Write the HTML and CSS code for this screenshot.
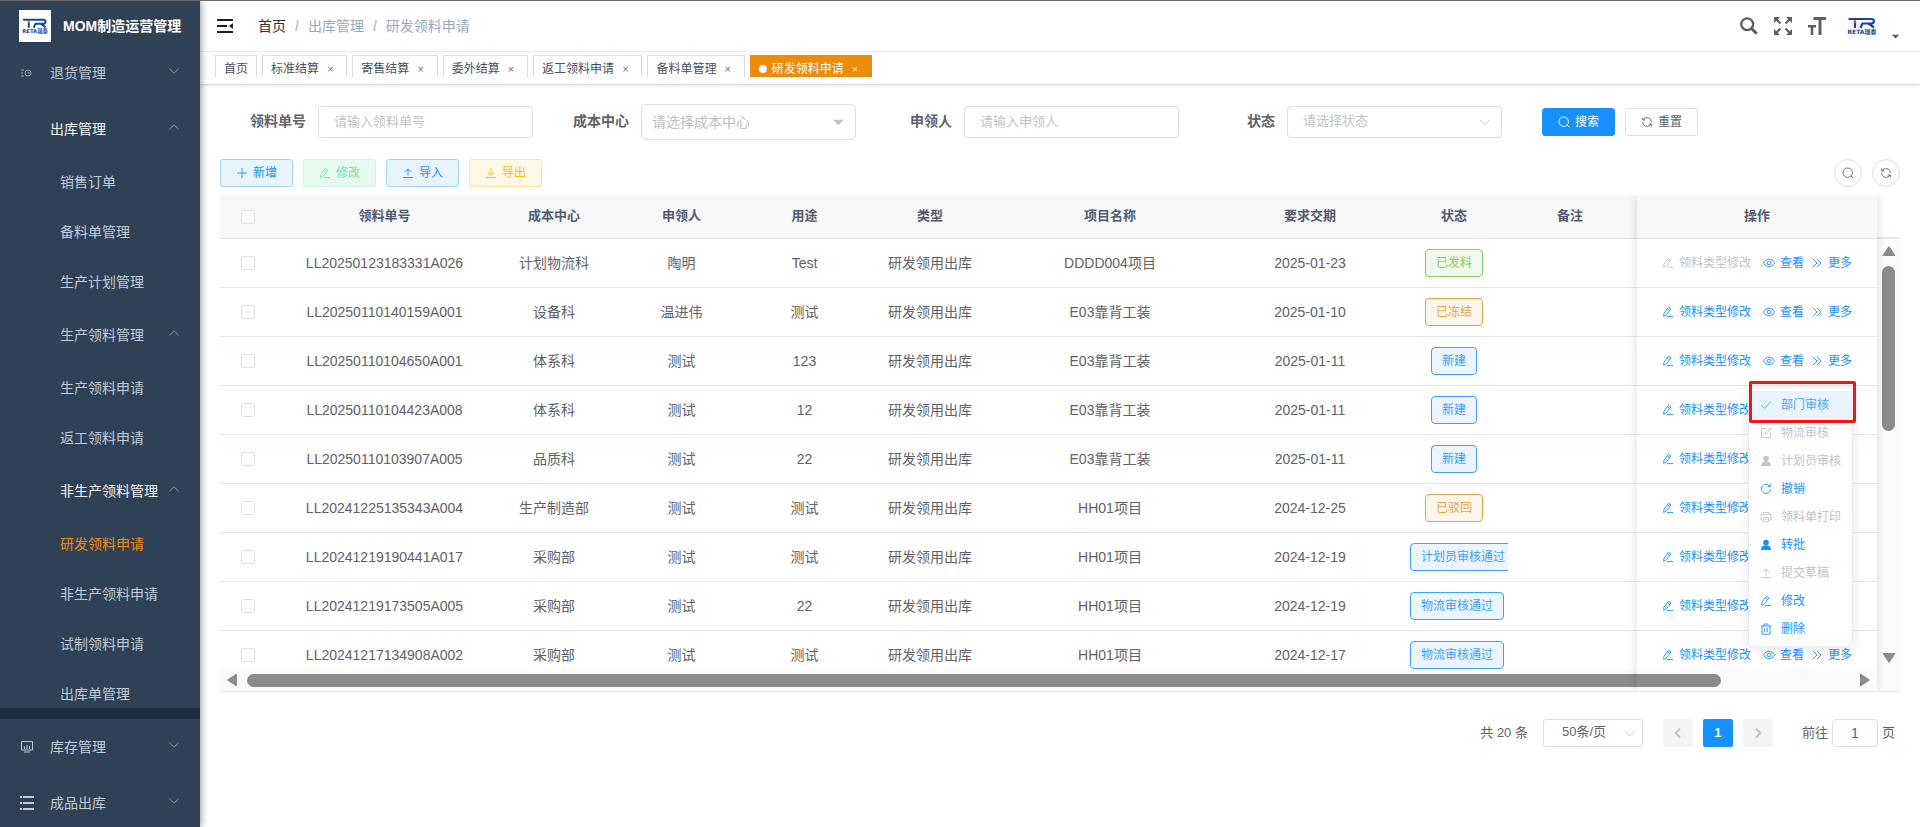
FILE: index.html
```html
<!DOCTYPE html>
<html lang="zh-CN">
<head>
<meta charset="utf-8">
<title>研发领料申请 - MOM制造运营管理</title>
<link rel="stylesheet" href="styles.css">
</head>
<body>
<svg class="sprite" aria-hidden="true">
  <symbol id="i-down" viewBox="0 0 12 12"><path d="M1.5 3.8 6 8.2l4.500-4.400"/></symbol>
  <symbol id="i-up" viewBox="0 0 12 12"><path d="M1.500 8.200 6 3.800l4.500 4.400"/></symbol>
  <symbol id="i-left" viewBox="0 0 12 12"><path d="M8 1.500 3.800 6 8 10.500"/></symbol>
  <symbol id="i-right" viewBox="0 0 12 12"><path d="M4 1.500 8.200 6 4 10.500"/></symbol>
  <symbol id="i-plus" viewBox="0 0 12 12"><path d="M6 1v10M1 6h10"/></symbol>
  <symbol id="i-edit" viewBox="0 0 12 12"><path d="M2 7.200 6.600 1.200l2.300 1.700L4.300 9 1.600 10.400zM5.500 2.800l2.200 1.700M5 10.600h6"/></symbol>
  <symbol id="i-upload" viewBox="0 0 12 12"><path d="M6 8.500V2M2.800 5 6 1.800 9.200 5M1 10.500h10"/></symbol>
  <symbol id="i-download" viewBox="0 0 12 12"><path d="M6 1v7M2.800 5 6 8.200 9.200 5M1 10.500h10"/></symbol>
  <symbol id="i-search" viewBox="0 0 12 12"><circle cx="5.700" cy="5.700" r="4.700"/><path d="m9 9 2.300 2.300"/></symbol>
  <symbol id="i-refresh" viewBox="0 0 12 12"><path d="M10.400 6A4.400 4.400 0 0 0 3 2.800L2 4M1.700 1.500V4h2.600M1.600 6A4.400 4.400 0 0 0 9 9.200L10 8M10.300 10.500V8H7.700"/></symbol>
  <symbol id="i-redo" viewBox="0 0 12 12"><path d="M10.500 6.300A4.600 4.600 0 1 1 8.600 2.200L10 3.300M10.300.8v2.700H7.600"/></symbol>
  <symbol id="i-eye" viewBox="0 0 12 12"><path d="M.5 6C2 3.300 4 2.200 6 2.200S10 3.300 11.500 6C10 8.700 8 9.800 6 9.800S2 8.700.5 6z"/><circle cx="6" cy="6" r="1.900"/></symbol>
  <symbol id="i-more" viewBox="0 0 12 12"><path d="M2 1.800 6 6l-4 4.200M6 1.800 10 6l-4 4.200"/></symbol>
  <symbol id="i-check" viewBox="0 0 12 12"><path d="m1.200 6.200 3.300 3.200L11 2.600"/></symbol>
  <symbol id="i-editbox" viewBox="0 0 12 12"><path d="M6.500 1.500h-5v9h9v-5M5 7l.3-1.600L10 .9l1 1L6.500 6.700z"/></symbol>
  <symbol id="i-user" viewBox="0 0 12 12"><g fill="currentColor" stroke="none"><circle cx="6" cy="3.600" r="2.900"/><path d="M4.800 6.500h2.400c2.500.3 3.800 1.800 3.800 4.500H1c0-2.700 1.300-4.200 3.800-4.500z"/></g></symbol>
  <symbol id="i-print" viewBox="0 0 12 12"><path d="M3 3.500v-2h6v2M3 9H1V3.500h10V9H9M3.500 6.500h5v4.300h-5zM5 8.500h2"/></symbol>
  <symbol id="i-trash" viewBox="0 0 12 12"><path d="M.8 3h10.400M2 3v8.200h8V3M4 2.800V1h4v1.800M4.700 5v4M7.300 5v4"/></symbol>
  <symbol id="i-dropdown" viewBox="0 0 12 12"><path d="M1 3.500h10L6 8.500z" fill="currentColor" stroke="none"/></symbol>
  <symbol id="i-arrow" viewBox="0 0 16 12"><path d="M8 1.500 14 10.500H2z" fill="currentColor" stroke="currentColor" stroke-linejoin="round"/></symbol>
  <symbol id="logo" viewBox="0 0 34 18">
    <g fill="none" stroke="#12479c" stroke-width="2.200"><path d="M3.500 2H17M10 5v6"/><path d="M17 2h9c4 0 4 4.500 0 4.500h-8.500L15.500 11M23.500 6.500 29 10.500" stroke-linejoin="round"/></g>
    <path d="M8.900 3.200h2.200v3H8.900z" fill="#e8413c"/>
    <text x="17" y="17" text-anchor="middle" class="logo-name">RETA瑞泰</text>
  </symbol>
</svg>

<div class="app">
  <aside class="sidebar">
    <div class="brand"><span class="brand-logo"><svg><use href="#logo"/></svg></span><h1>MOM制造运营管理</h1></div>
    <nav class="menu">
      <a href="#" class="group"><svg class="menu-icon faint" viewBox="0 0 14 14"><path d="M1 4h3M1 7h2M1 10h3"/><circle cx="8" cy="7" r="3"/><path d="M8 5.500V7h1.500"/></svg><span>退货管理</span><svg class="icon chevron"><use href="#i-down"/></svg></a>
      <a href="#" class="group open"><i class="menu-icon"></i><span>出库管理</span><svg class="icon chevron"><use href="#i-up"/></svg></a>
      <a href="#" class="leaf">销售订单</a>
      <a href="#" class="leaf">备料单管理</a>
      <a href="#" class="leaf">生产计划管理</a>
      <a href="#" class="group sub"><span>生产领料管理</span><svg class="icon chevron"><use href="#i-up"/></svg></a>
      <a href="#" class="leaf">生产领料申请</a>
      <a href="#" class="leaf">返工领料申请</a>
      <a href="#" class="group sub open"><span>非生产领料管理</span><svg class="icon chevron"><use href="#i-up"/></svg></a>
      <a href="#" class="leaf current">研发领料申请</a>
      <a href="#" class="leaf">非生产领料申请</a>
      <a href="#" class="leaf">试制领料申请</a>
      <a href="#" class="leaf last">出库单管理</a>
      <a href="#" class="group"><svg class="menu-icon" viewBox="0 0 14 14"><path d="M1.500 1.500h11v8.500h-11zM4 12h6M4.500 6.500v2.500M7 5v4M9.500 6v3"/></svg><span>库存管理</span><svg class="icon chevron"><use href="#i-down"/></svg></a>
      <a href="#" class="group"><svg class="menu-icon bold" viewBox="0 0 14 14"><path d="M0 1h2M3 1h11M0 7h2M3 7h11M0 13h2M3 13h11"/></svg><span>成品出库</span><svg class="icon chevron"><use href="#i-down"/></svg></a>
    </nav>
  </aside>

  <main class="main">
    <header class="navbar">
      <button class="fold" aria-label="折叠菜单"><svg viewBox="0 0 16 14"><path d="M0 1h16M0 7h10M0 13h16" stroke="currentColor" stroke-width="2"/><path d="M16 4v6l-4-3z" fill="currentColor"/></svg></button>
      <nav class="crumbs"><a href="#">首页</a><b>/</b><span>出库管理</span><b>/</b><span>研发领料申请</span></nav>
      <div class="tools">
        <button aria-label="搜索"><svg viewBox="0 0 18 18" fill="none" stroke="currentColor"><circle cx="7.200" cy="7.200" r="5.900" stroke-width="2.300"/><path d="m11.500 11.500 5.300 5.300" stroke-width="3"/></svg></button>
        <button aria-label="全屏"><svg viewBox="0 0 18 18" fill="currentColor" stroke="currentColor"><path d="M0 0h6L0 6zM18 0v6l-6-6zM0 18v-6l6 6zM18 18h-6l6-6z" stroke="none"/><path d="m2 2 4.500 4.500M16 2l-4.500 4.500M2 16l4.500-4.500M16 16l-4.500-4.500" stroke-width="2.200"/></svg></button>
        <button aria-label="字号"><svg viewBox="0 0 18 18" fill="currentColor"><path d="M5.500 0H18v3h-4.500v15h-3V3h-5zM0 8h8v2.500H5.300V18H2.700v-7.500H0z"/></svg></button>
        <button class="account" aria-label="账户"><svg class="account-logo"><use href="#logo"/></svg><svg class="icon caret"><use href="#i-dropdown"/></svg></button>
      </div>
    </header>

    <nav class="tabs">
      <div class="tabs-row">
        <a href="#" class="tab">首页</a>
        <a href="#" class="tab">标准结算 <i>×</i></a>
        <a href="#" class="tab">寄售结算 <i>×</i></a>
        <a href="#" class="tab">委外结算 <i>×</i></a>
        <a href="#" class="tab">返工领料申请 <i>×</i></a>
        <a href="#" class="tab">备料单管理 <i>×</i></a>
        <a href="#" class="tab active">研发领料申请 <i>×</i></a>
      </div>
    </nav>

    <div class="content">
      <form class="filters">
        <div class="field"><label for="f-no">领料单号</label><input id="f-no" type="text" placeholder="请输入领料单号"></div>
        <div class="field"><label for="f-center">成本中心</label><div class="select tall"><select id="f-center"><option>请选择成本中心</option></select><svg class="icon"><use href="#i-dropdown"/></svg></div></div>
        <div class="field"><label for="f-user">申领人</label><input id="f-user" type="text" placeholder="请输入申领人"></div>
        <div class="field"><label for="f-state">状态</label><div class="select"><select id="f-state"><option>请选择状态</option></select><svg class="icon"><use href="#i-down"/></svg></div></div>
        <div class="filter-actions">
          <button type="button" class="btn primary"><svg class="icon"><use href="#i-search"/></svg>搜索</button>
          <button type="button" class="btn"><svg class="icon"><use href="#i-refresh"/></svg>重置</button>
        </div>
      </form>

      <div class="toolbar">
        <button class="btn blue"><svg class="icon"><use href="#i-plus"/></svg>新增</button>
        <button class="btn green" disabled><svg class="icon"><use href="#i-edit"/></svg>修改</button>
        <button class="btn blue"><svg class="icon"><use href="#i-upload"/></svg>导入</button>
        <button class="btn yellow"><svg class="icon"><use href="#i-download"/></svg>导出</button>
        <div class="round-group">
          <button class="round" aria-label="显示搜索"><svg class="icon"><use href="#i-search"/></svg></button>
          <button class="round" aria-label="刷新"><svg class="icon"><use href="#i-refresh"/></svg></button>
        </div>
      </div>

      <section class="grid">
        <div class="grid-view">
          <table>
            <colgroup><col class="c-check"><col class="c-no"><col class="c-center"><col class="c-user"><col class="c-use"><col class="c-type"><col class="c-project"><col class="c-date"><col class="c-state"><col><col class="c-ops"></colgroup>
            <thead><tr><th><input type="checkbox" aria-label="全选"></th><th>领料单号</th><th>成本中心</th><th>申领人</th><th>用途</th><th>类型</th><th>项目名称</th><th>要求交期</th><th>状态</th><th class="note">备注</th><th>操作</th></tr></thead>
            <tbody id="rows"></tbody>
          </table>
        </div>
        <div class="vscroll"><svg class="arrow"><use href="#i-arrow"/></svg><div class="vtrack"><div class="vthumb"></div></div><svg class="arrow down"><use href="#i-arrow"/></svg></div>
        <div class="hscroll"><svg class="arrow left"><use href="#i-arrow"/></svg><div class="htrack"><div class="hthumb"></div></div><svg class="arrow right"><use href="#i-arrow"/></svg></div>
        <div class="fixed-shadow"></div>

        <div class="popup">
          <button class="hover"><svg class="icon"><use href="#i-check"/></svg>部门审核</button>
          <button disabled><svg class="icon"><use href="#i-editbox"/></svg>物流审核</button>
          <button disabled><svg class="icon"><use href="#i-user"/></svg>计划员审核</button>
          <button><svg class="icon"><use href="#i-redo"/></svg>撤销</button>
          <button disabled><svg class="icon"><use href="#i-print"/></svg>领料单打印</button>
          <button><svg class="icon"><use href="#i-user"/></svg>转批</button>
          <button disabled><svg class="icon"><use href="#i-upload"/></svg>提交草稿</button>
          <button><svg class="icon"><use href="#i-edit"/></svg>修改</button>
          <button><svg class="icon"><use href="#i-trash"/></svg>删除</button>
          <span class="marker"></span>
        </div>
      </section>

      <footer class="pager">
        <span class="total">共 20 条</span>
        <div class="select size"><select aria-label="每页条数"><option>50条/页</option></select><svg class="icon"><use href="#i-down"/></svg></div>
        <button class="page" disabled aria-label="上一页"><svg class="icon"><use href="#i-left"/></svg></button>
        <button class="page on">1</button>
        <button class="page" disabled aria-label="下一页"><svg class="icon"><use href="#i-right"/></svg></button>
        <label class="jump">前往<input type="text" value="1">页</label>
      </footer>
    </div>
  </main>
</div>
<script src="app.js"></script>
</body>
</html>
```
FILE: app.js
```js
const rows = [
  ['LL20250123183331A026', '计划物流科', '陶明', 'Test', 'DDDD004项目', '2025-01-23', '已发料', 'success'],
  ['LL20250110140159A001', '设备科', '温进伟', '测试', 'E03靠背工装', '2025-01-10', '已冻结', 'warning'],
  ['LL20250110104650A001', '体系科', '测试', '123', 'E03靠背工装', '2025-01-11', '新建', 'info'],
  ['LL20250110104423A008', '体系科', '测试', '12', 'E03靠背工装', '2025-01-11', '新建', 'info'],
  ['LL20250110103907A005', '品质科', '测试', '22', 'E03靠背工装', '2025-01-11', '新建', 'info'],
  ['LL20241225135343A004', '生产制造部', '测试', '测试', 'HH01项目', '2024-12-25', '已驳回', 'warning'],
  ['LL20241219190441A017', '采购部', '测试', '测试', 'HH01项目', '2024-12-19', '计划员审核通过', 'info'],
  ['LL20241219173505A005', '采购部', '测试', '22', 'HH01项目', '2024-12-19', '物流审核通过', 'info'],
  ['LL20241217134908A002', '采购部', '测试', '测试', 'HH01项目', '2024-12-17', '物流审核通过', 'info']
];
const icon = (name) => `<svg class="icon"><use href="#i-${name}"/></svg>`;

document.getElementById('rows').innerHTML = rows.map(([no, center, user, use, project, date, state, kind], i) => `
  <tr>
    <td><input type="checkbox" aria-label="${no}"></td>
    <td>${no}</td><td>${center}</td><td>${user}</td><td>${use}</td><td>研发领用出库</td><td>${project}</td><td>${date}</td>
    <td class="state"><span class="tag ${kind}">${state}</span></td>
    <td></td>
    <td class="ops"><div><button${i === 0 ? ' disabled' : ''}>${icon('edit')}领料类型修改</button><button>${icon('eye')}查看</button><button class="more">${icon('more')}更多</button></div></td>
  </tr>`).join('');
```
FILE: styles.css
```css
* { box-sizing: border-box; }
body { margin: 0; font: 14px/20px "Liberation Sans", "Noto Sans CJK SC", sans-serif; color: #606266; background: #fff; }
a { color: inherit; text-decoration: none; }
button, input, select { font: inherit; color: inherit; margin: 0; }
button { padding: 0; border: 0; background: none; }
.sprite { position: absolute; width: 0; height: 0; }
.icon { width: 12px; height: 12px; flex: none; fill: none; stroke: currentColor; stroke-width: .9; }
.logo-name { font: bold 6px "DejaVu Sans", "Noto Sans CJK SC", sans-serif; fill: #12479c; }

.app { display: flex; height: 100vh; border-top: 1px solid #6b6b6b; overflow: hidden; }

.sidebar { width: 200px; flex: none; background: #304156; color: #bfcbd9; box-shadow: 2px 0 6px rgba(0, 21, 41, .35); z-index: 2; overflow: hidden; }
.brand { display: flex; align-items: center; gap: 12px; height: 44px; padding: 9px 0 3px 19px; }
.brand-logo { width: 32px; height: 32px; background: #fff; display: flex; align-items: center; justify-content: center; }
.brand-logo svg { width: 30px; height: 16px; }
.brand h1 { margin: 0; font-size: 14px; font-weight: bold; color: #fff; white-space: nowrap; }
.menu { display: flex; flex-direction: column; }
.group { display: flex; align-items: center; height: 56px; flex: none; padding: 0 20px; }
.group span { flex: 1; white-space: nowrap; }
.group.sub, .leaf { padding-left: 60px; }
.group.open { color: #f4f4f5; }
.menu-icon { width: 14px; height: 14px; margin-right: 16px; fill: none; stroke: currentColor; stroke-width: 1; }
.menu-icon.faint { opacity: .7; }
.menu-icon.bold { stroke-width: 2; }
.chevron { color: #8f98a5; margin-bottom: 4px; }
.leaf { height: 50px; line-height: 50px; flex: none; }
.leaf.current { color: #ef8b0a; }
.leaf.last { border-bottom: 11px solid #1f2d3d; }

.main { flex: 1; min-width: 0; display: flex; flex-direction: column; }
.navbar { height: 51px; flex: none; display: flex; align-items: center; padding: 0 20px 0 17px; border-bottom: 1px solid #f0f0f0; }
.fold { display: flex; color: #1f1f1f; }
.fold svg { width: 16px; height: 14px; }
.crumbs { display: flex; margin-left: 25px; color: #97a8be; }
.crumbs a { color: #303133; }
.crumbs b { margin: 0 9px; color: #c0c4cc; }
.tools { margin-left: auto; display: flex; align-items: center; gap: 16px; color: #5a5e66; }
.tools button { display: flex; }
.tools button > svg { width: 18px; height: 18px; }
.tools .account { align-items: flex-end; margin: 6px 0 0 3px; gap: 12px; }
.tools .account .account-logo { width: 34px; height: 18px; margin-bottom: 6px; }
.tools .account .caret { width: 9px; height: 9px; }

.tabs { flex: none; height: 33px; padding-top: 3px; border-bottom: 1px solid #d8dce5; box-shadow: 0 1px 3px rgba(0, 0, 0, .12); }
.tabs-row { display: flex; gap: 5px; height: 22px; overflow: hidden; padding-left: 15px; }
.tab { flex: none; height: 26px; padding: 0 8px; border: 1px solid #d8dce5; font-size: 12px; line-height: 26px; color: #495060; }
.tab i { display: inline-block; width: 16px; text-align: center; font-style: normal; font-size: 11px; opacity: .8; }
.tab.active { background: #ef8b0a; border-color: #ef8b0a; color: #fff; }
.tab.active::before { content: ""; display: inline-block; width: 8px; height: 8px; margin-right: 5px; border-radius: 50%; background: #fff; }

.content { padding: 19px 20px 0; }
.filters { display: flex; align-items: center; height: 36px; }
.field { display: flex; align-items: center; flex: 0 1 323px; padding-right: 10px; }
.field label { width: 98px; flex: none; padding: 0 12px 2px 0; text-align: right; font-weight: bold; }
.field input, .select select { width: 100%; height: 32px; border: 1px solid #dcdfe6; border-radius: 4px; background: #fff; padding: 0 15px 2px; font-size: 13px; }
.field input::placeholder, .field select { color: #bfc3cb; opacity: 1; }
.select { position: relative; flex: 1; }
.select select { display: block; appearance: none; }
.select .icon { position: absolute; right: 11px; top: 0; bottom: 0; margin: auto; width: 13px; height: 13px; color: #c0c4cc; pointer-events: none; }
.select.tall select { height: 36px; padding: 0 10px; font-size: 14px; border-color: #ddd; border-radius: 5px; color: #bdbdbd; }
.filter-actions { display: flex; gap: 10px; margin-left: 30px; }
.btn { display: flex; align-items: center; gap: 5px; height: 28px; padding: 0 15px; border: 1px solid #dcdfe6; border-radius: 3px; background: #fff; font-size: 12px; white-space: nowrap; }
.btn.primary { background: #1890ff; border-color: #1890ff; color: #fff; }
.btn.blue { background: #e8f4ff; border-color: #a3d3ff; color: #1890ff; }
.btn.green { background: #e7faf0; border-color: #d0f5e0; color: #71e2a3; }
.btn.yellow { background: #fff8e6; border-color: #ffe399; color: #ffba00; }
.toolbar { display: flex; gap: 10px; margin-top: 19px; }
.round-group { display: flex; gap: 10px; margin-left: auto; }
.round { width: 28px; height: 28px; display: flex; align-items: center; justify-content: center; border: 1px solid #dcdfe6; border-radius: 50%; }

.grid { position: relative; display: grid; grid-template: 474px 22px / minmax(0, 1fr) 23px; margin-top: 8px; border-bottom: 1px solid #e6ebf5; }
.grid-view { overflow: hidden; }
table { width: 100%; table-layout: fixed; border-collapse: separate; border-spacing: 0; }
.c-check { width: 55px; } .c-no { width: 219px; } .c-center { width: 120px; } .c-user { width: 135px; } .c-use { width: 111px; }
.c-type { width: 140px; } .c-project { width: 220px; } .c-date { width: 180px; } .c-state { width: 108px; } .c-ops { width: 240px; }
th, td { padding: 0 10px; text-align: center; vertical-align: middle; border-bottom: 1px solid #dfe6ec; white-space: nowrap; overflow: hidden; }
th { height: 44px; padding-bottom: 2px; background: #f8f8f9; color: #515a6e; font-size: 13px; }
th.note { padding-right: 15px; }
td { height: 49px; }
th:first-child, td:first-child { padding: 0; }
input[type="checkbox"] { display: block; margin: 0 auto; appearance: none; width: 14px; height: 14px; border: 1px solid #dcdfe6; border-radius: 2px; background: #fff; }
.tag { display: inline-block; height: 28px; padding: 0 10px; border: 1px solid; border-radius: 4px; font-size: 12px; line-height: 26px; vertical-align: middle; }
.tag.success { color: #85ce61; background: #f0f9eb; }
.tag.warning { color: #e6a23c; background: #fdf6ec; }
.tag.info { color: #409eff; background: #ecf5ff; }
.ops div { display: flex; justify-content: center; gap: 12px; }
.ops button { display: flex; align-items: center; gap: 5px; font-size: 12px; color: #1890ff; }
.ops button.more { margin-left: -5px; }
.ops button:disabled { color: #c0c4cc; }

.arrow { width: 16px; height: 12px; flex: none; color: #8b8b8b; }
.vscroll { grid-row: 1 / 3; grid-column: 2; margin-top: 42px; border-top: 2px solid #dfe6ec; background: #fbfbfb; display: flex; flex-direction: column; align-items: center; padding: 6px 0 27px; }
.vtrack { flex: 1; padding: 9px 0 0; }
.vthumb { width: 13px; height: 165px; border-radius: 7px; background: #8b8b8b; }
.arrow.down { transform: rotate(180deg); }
.hscroll { grid-row: 2; grid-column: 1; background: #fbfbfb; display: flex; align-items: center; padding: 0 4px; }
.htrack { flex: 1; padding: 0 8px 0 7px; }
.hthumb { width: 92%; height: 13px; border-radius: 7px; background: #8b8b8b; }
.arrow.left { transform: rotate(-90deg); }
.arrow.right { transform: rotate(90deg); }
.fixed-shadow { position: absolute; top: 0; bottom: 0; right: 23px; width: 240px; box-shadow: 0 0 10px rgba(0, 0, 0, .14); clip-path: inset(0 -12px); pointer-events: none; }

.popup { position: absolute; top: 192px; right: 47px; width: 105px; padding: 3px 0; border: 1px solid #e6ebf5; border-radius: 4px; background: #fff; box-shadow: 0 2px 12px rgba(0, 0, 0, .1); }
.popup button { display: flex; align-items: center; gap: 9px; width: 100%; height: 28px; padding-left: 11px; font-size: 12px; color: #1890ff; white-space: nowrap; }
.popup button:disabled { color: #c0c4cc; }
.popup button.hover { background: #e8f4ff; color: #46a6ff; }
.marker { position: absolute; left: 0; right: -4px; top: -7px; height: 42px; border: 3px solid #ff1205; border-radius: 2px; pointer-events: none; }

.pager { display: flex; align-items: center; justify-content: flex-end; padding: 27px 5px 0 0; font-size: 13px; }
.pager .size { flex: none; width: 100px; margin: 0 20px 0 15px; }
.pager .size select { height: 28px; padding: 0 18px 2px; border-radius: 3px; }
.pager .size .icon { right: 7px; width: 12px; }
.page { width: 30px; height: 28px; margin-right: 10px; border-radius: 2px; background: #f4f4f5; color: #c0c4cc; display: flex; align-items: center; justify-content: center; }
.page .icon { stroke-width: 2; }
.page.on { background: #1890ff; color: #fff; font-weight: bold; }
.jump { display: flex; align-items: center; gap: 4px; margin-left: 19px; }
.jump input { width: 46px; height: 28px; border: 1px solid #dcdfe6; border-radius: 4px; text-align: center; font-size: 14px; }
```
